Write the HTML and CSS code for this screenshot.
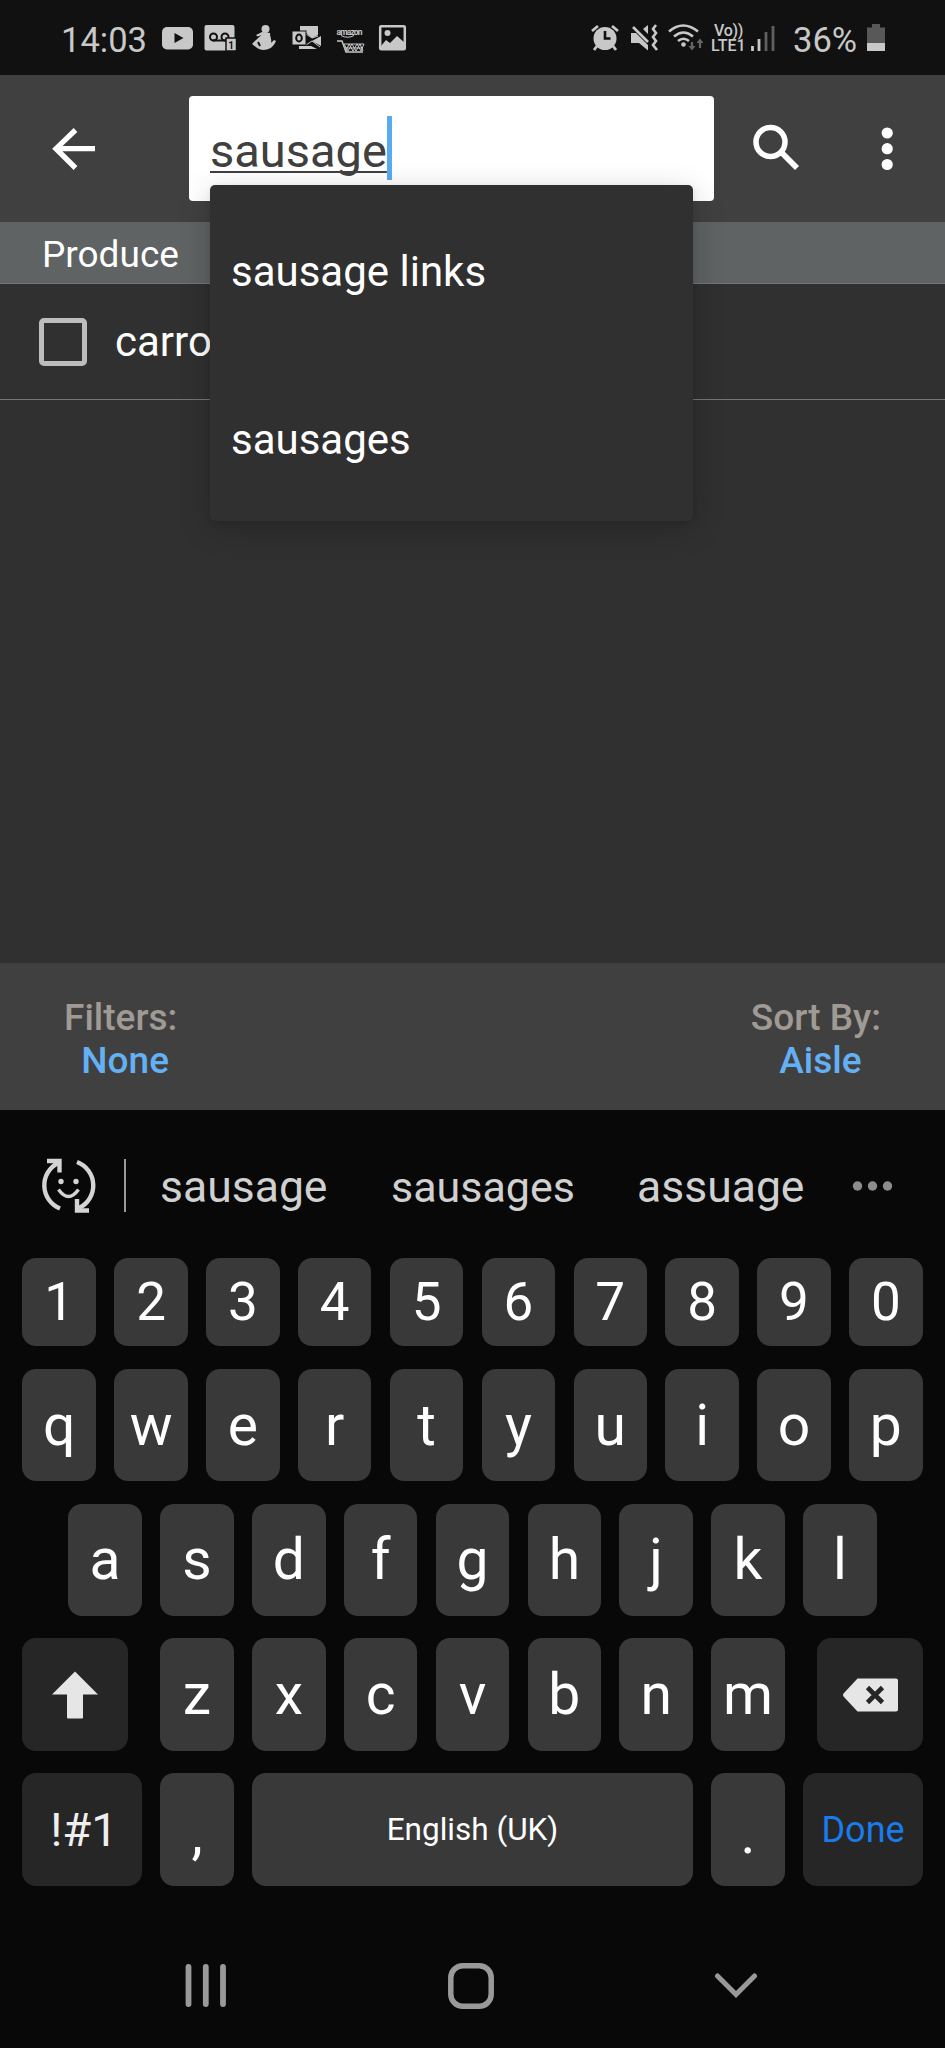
FILE: index.html
```html
<!DOCTYPE html>
<html lang="en">
<head>
<meta charset="utf-8">
<title>Shopping list</title>
<link rel="stylesheet" href="styles.css">
</head>
<body>
<header class="status">
  <span class="clock">14:03</span>
  <svg width="40" height="36" viewBox="160 20 40 36"><rect x="162" y="27" width="31" height="22.500" rx="5" fill="#c8c8c8"/><path d="M174.500 33v10l9-5z" fill="#111"/></svg>
  <svg width="45" height="36" viewBox="200 20 45 36"><rect x="204.500" y="25" width="30" height="25.500" rx="2" fill="#c8c8c8"/><g fill="none" stroke="#111" stroke-width="2"><circle cx="213.500" cy="37" r="3.500"/><circle cx="225" cy="37" r="3.500"/><path d="M213 40.500h14"/></g><path d="M226 38h10.500v13H226z" fill="#c8c8c8" stroke="#111" stroke-width="1.500"/><text x="228.200" y="49" class="tiny dark">1</text></svg>
  <svg width="40" height="36" viewBox="245 20 40 36"><circle cx="265.500" cy="29" r="4" fill="#c8c8c8"/><path d="M262 32l-6 3 1.500 1.500 4-1.500c-2 2-7 6-9.500 9 3 2 6 6 11 6 7 0 11-4 13-9l-2-1-3 3c1-4-1-5-1-10z" fill="#c8c8c8"/><path d="M258 42l2 4" stroke="#111" stroke-width="2"/></svg>
  <svg width="45" height="36" viewBox="285 20 45 36"><path d="M300 26h18v9l-6 3-7-6h-5zM321 36v10l-9-5zM299 46h12l6 3h-18z" fill="#c8c8c8"/><path d="M306 34l6 4 6-2M306 45l6-4 8 6" stroke="#c8c8c8" fill="none"/><rect x="292" y="31" width="14" height="14" fill="#c8c8c8" stroke="#111" stroke-width="1"/><ellipse cx="299" cy="38" rx="2.800" ry="3.500" fill="none" stroke="#111" stroke-width="2"/></svg>
  <svg width="42" height="36" viewBox="330 20 42 36"><text x="336.500" y="34.500" textLength="26" class="amazon">amazon</text><path d="M341 35.500q7 3.500 13 0" stroke="#c8c8c8" fill="none"/><path d="M337 41h5l4 11h17" fill="none" stroke="#c8c8c8" stroke-width="1.500"/><path d="M344 44h20M345 48h18M344 44l4 7 4-7 4 7 4-7 3 7M346 51l3-7 4 7 4-7 4 7 3-7" fill="none" stroke="#c8c8c8" stroke-width="1"/></svg>
  <svg width="40" height="36" viewBox="372 20 40 36"><rect x="380.200" y="26.200" width="24.600" height="23.100" rx="1" fill="none" stroke="#c8c8c8" stroke-width="2.500"/><circle cx="387.500" cy="33" r="3" fill="#c8c8c8"/><path d="M381 46l5-6 4 3 7-7 8 7v6h-24z" fill="#c8c8c8"/></svg>
  <div class="status-right">
    <svg width="39" height="36" viewBox="585 20 39 36"><circle cx="605" cy="38.500" r="11.500" fill="#c8c8c8"/><path d="M592 31l6-5M618 31l-6-5M597 46l-3 4M613 46l3 4" stroke="#c8c8c8" stroke-width="2.800"/><path d="M605 31v7.500h5.500" fill="none" stroke="#111" stroke-width="2.600"/></svg>
    <svg width="38" height="36" viewBox="624 20 38 36"><path d="M631 33h5l12 12v5.500l-9-7.500h-8zM643 29l5-4v9z" fill="#c8c8c8"/><path d="M633 27l15 15" stroke="#c8c8c8" stroke-width="2.600"/><path d="M656 25l-3 4 3 4-3 4 3 4-3 4 4 5" fill="none" stroke="#c8c8c8" stroke-width="2.600"/></svg>
    <svg width="46" height="36" viewBox="662 20 46 36"><path d="M669 31.500q14-12 29 0M674 36.500q9.500-8 19 0M678 41q5.500-4.500 11 0" fill="none" stroke="#c8c8c8" stroke-width="2.600"/><circle cx="683.500" cy="44.500" r="2.300" fill="#c8c8c8"/><path d="M692 42v6M700 48v-6" stroke="#666" stroke-width="2.200"/><path d="M688.500 46h7l-3.500 4.500zM696.500 43h7l-3.500-4.500z" fill="#666"/></svg>
    <div class="volte"><span>Vo))</span><span class="lte">LTE1</span></div>
    <svg width="38" height="36" viewBox="748 20 38 36"><path d="M752.500 46v5M759 39v12" stroke="#c8c8c8" stroke-width="2.800"/><path d="M766 32v19M773 26v25" stroke="#606060" stroke-width="2.800"/></svg>
    <span class="percent">36%</span>
    <svg width="24" height="36" viewBox="864 20 24 36"><path d="M872 24h8v3.500h5V44h-18V27.500h5z" fill="#585858"/><path d="M867 43h18v8h-18z" fill="#c8c8c8"/></svg>
  </div>
</header>

<div class="appbar">
  <svg class="back" width="50" height="50" viewBox="50 124 50 50"><path d="M95 148.700H56M75.500 130L56 148.700 75.500 168" fill="none" stroke="#fff" stroke-width="5.300"/></svg>
  <div class="search">
    <span class="query">sausage</span><i class="caret"></i>
    <ul class="dropdown"><li>sausage links</li><li>sausages</li></ul>
  </div>
  <svg class="find" width="54" height="54" viewBox="748 120 54 54"><circle cx="770.500" cy="142" r="14.500" fill="none" stroke="#fff" stroke-width="5.500"/><path d="M781 152.500l3-1.500 15 15-4 4-14-14z" fill="#fff"/></svg>
  <svg class="more" width="20" height="50" viewBox="877 124 20 50"><g fill="#fff"><circle cx="887.200" cy="133" r="5.600"/><circle cx="887.200" cy="148.700" r="5.600"/><circle cx="887.200" cy="164.500" r="5.600"/></g></svg>
</div>

<main class="list">
  <h2 class="section">Produce</h2>
  <div class="item"><span class="box"></span><span>carrots</span></div>
</main>

<div class="filters">
  <div class="filter"><span>Filters:</span><b>None</b></div>
  <div class="filter"><span>Sort By:</span><b>Aisle</b></div>
</div>

<section class="keyboard">
  <div class="suggest">
    <svg width="60" height="60" viewBox="38 1156 60 60"><g fill="none" stroke="#d4d4d4" stroke-width="4.400"><path d="M60 1208.500A25 25 0 0 1 58 1163"/><path d="M77 1162A25 25 0 0 1 79 1208"/><path d="M47 1161h12.500v11.500M89 1210.500H77V1199"/><path d="M58.500 1189.500q10 14 20 0" stroke-width="3.400"/></g><circle cx="61" cy="1181.500" r="2.700" fill="#d4d4d4"/><circle cx="76" cy="1181.500" r="2.700" fill="#d4d4d4"/></svg>
    <i class="bar"></i>
    <span class="w1">sausage</span><span class="w2">sausages</span><span class="w3">assuage</span>
    <svg width="44" height="12" viewBox="850 1179 44 12"><g fill="#8c8c8c"><circle cx="856.500" cy="1185" r="4.700"/><circle cx="871.500" cy="1185" r="4.700"/><circle cx="886.500" cy="1185" r="4.700"/></g></svg>
  </div>
  <div class="keys digits"><span>1</span><span>2</span><span>3</span><span>4</span><span>5</span><span>6</span><span>7</span><span>8</span><span>9</span><span>0</span></div>
  <div class="keys"><span>q</span><span>w</span><span>e</span><span>r</span><span>t</span><span>y</span><span>u</span><span>i</span><span>o</span><span>p</span></div>
  <div class="keys"><span>a</span><span>s</span><span>d</span><span>f</span><span>g</span><span>h</span><span>j</span><span>k</span><span>l</span></div>
  <div class="keys">
    <span class="fn shift"><svg width="46" height="48" viewBox="0 0 46 48"><path d="M23 .5L46 23.500H31V46.500q0 1-1 1H16q-1 0-1-1V23.500H0z" fill="#e6e6e6"/></svg></span>
    <span>z</span><span>x</span><span>c</span><span>v</span><span>b</span><span>n</span><span>m</span>
    <span class="fn erase"><svg width="55" height="34" viewBox="0 0 55 34"><path d="M14.500 .5H53q2 0 2 2v29q0 2-2 2H14.500L1 19q-2-2 0-4z" fill="#e6e6e6"/><path d="M24.500 9.500l15 15M39.500 9.500l-15 15" stroke="#262626" stroke-width="4.600"/></svg></span>
  </div>
  <div class="keys"><span class="fn wide symbols">!#1</span><span class="punct">,</span><span class="space">English (UK)</span><span class="punct">.</span><span class="fn wide done">Done</span></div>
</section>

<nav class="nav">
  <svg width="42" height="46" viewBox="0 0 42 46"><path d="M3.500 4v37M20.800 4v37M38 4v37" stroke="#999" stroke-width="5.800" stroke-linecap="round"/></svg>
  <svg width="46" height="46" viewBox="0 0 46 46"><rect x="2.800" y="2.800" width="40.400" height="40.400" rx="12" fill="none" stroke="#999" stroke-width="5.500"/></svg>
  <svg width="44" height="28" viewBox="0 0 44 28"><path d="M3.500 4L22 22.500 40.500 4" fill="none" stroke="#999" stroke-width="5" stroke-linecap="round"/></svg>
</nav>
</body>
</html>
```
FILE: styles.css
```css
* { box-sizing: border-box; }
body { margin: 0; width: 945px; height: 2048px; display: flex; flex-direction: column; background: #080808; color: #fff; font-family: Roboto, "Liberation Sans", sans-serif; overflow: hidden; }
svg { display: block; flex: none; }

.status { height: 75px; flex: none; display: flex; background: #111; color: #c8c8c8; padding: 20px 57px 0 61px; font-size: 34.500px; line-height: 40px; }
.clock { width: 99px; }
.status-right { margin-left: auto; display: flex; }
.volte { width: 40px; display: flex; flex-direction: column; font-size: 16px; font-weight: 500; line-height: 15px; padding: 3px 0 0 6px; letter-spacing: -.3px; }
.lte { margin-left: -3px; letter-spacing: 0; }
.percent { width: 78px; padding-left: 7px; }
.tiny { font-size: 10px; font-weight: 700; }
.dark { fill: #111; }
.amazon { font-size: 8.500px; font-weight: 700; fill: #c8c8c8; }

.appbar { height: 147px; flex: none; display: flex; align-items: flex-start; background: #404040; position: relative; z-index: 1; }
.back { margin: 49px 0 0 50px; }
.search { position: relative; margin: 21px 34px 0 89px; width: 525px; height: 105px; background: #fff; border-radius: 4px; padding: 20px 0 0 21px; display: flex; }
.query { font-size: 47px; line-height: 70px; color: #404040; text-decoration: underline; text-decoration-thickness: 2px; text-underline-offset: 4px; text-decoration-skip-ink: none; }
.caret { width: 5px; height: 64px; background: #5aaaf0; }
.dropdown { position: absolute; left: 21px; top: 89px; width: 483px; height: 336px; margin: 0; padding: 3px 0 0; list-style: none; background: #303030; border-radius: 5px; box-shadow: 0 8px 32px rgba(0,0,0,.2), 0 2px 6px rgba(0,0,0,.08); }
.dropdown li { height: 168px; line-height: 168px; padding-left: 21px; font-size: 42px; }
.find { margin-top: 45px; }
.more { margin: 49px 0 0 75px; }

.list { flex: 1; background: #303030; }
.section { margin: 0; height: 62px; padding: 3px 0 0 42px; background: #5f6363; border-bottom: 1px solid #747777; font-size: 37px; font-weight: 400; line-height: 59px; }
.item { height: 116px; display: flex; align-items: center; border-bottom: 1px solid #757575; padding: 0 0 0 39px; font-size: 42px; }
.box { width: 48px; height: 48px; border: 5px solid #bdbdbd; border-radius: 5px; margin-right: 28px; }

.filters { height: 147px; flex: none; background: #404040; display: flex; justify-content: space-between; padding: 33px 64px 0; font-size: 37px; line-height: 43px; font-weight: 500; color: #a09a94; }
.filter { display: flex; flex-direction: column; align-items: center; }
.filter b { font-weight: 500; color: #64b0f5; margin-left: 9px; }

.keyboard { height: 776px; flex: none; display: flex; flex-direction: column; gap: 22.300px; padding: 0 22px; }
.suggest { height: 125.700px; padding-top: 24px; display: flex; align-items: center; color: #d0d0d0; font-size: 44.500px; margin-left: 16px; }
.suggest > svg { margin-top: 2px; }
.suggest > span { padding-top: 4px; }
.bar { width: 2px; height: 53px; background: #999; margin: 2px 34px 0 26px; }
.w1 { width: 231px; }
.suggest .w2 { width: 246px; font-size: 43px; }
.w3 { width: 214px; }
.keys { display: flex; justify-content: center; gap: 18.350px; height: 112.500px; font-size: 57px; }
.keys span { width: 73.500px; background: #393939; border-radius: 14px; display: flex; align-items: center; justify-content: center; }
.digits { height: 88.500px; font-size: 53px; }
.keys .fn { width: 106px; background: #262626; }
.keys .shift { margin-right: 13.500px; }
.keys .erase { margin-left: 13.500px; padding-left: 1px; }
.keys .wide { width: 120px; }
.keys .symbols { font-size: 47px; color: #eee; padding-left: 4px; }
.keys .space { width: 441px; font-size: 31.500px; }
.keys .punct { padding-top: 8px; }
.keys .done { font-size: 36px; color: #1a7cec; padding-top: 1px; }

.nav { height: 162px; flex: none; display: flex; justify-content: space-between; align-items: center; padding: 38px 187px 0 185px; }
```
